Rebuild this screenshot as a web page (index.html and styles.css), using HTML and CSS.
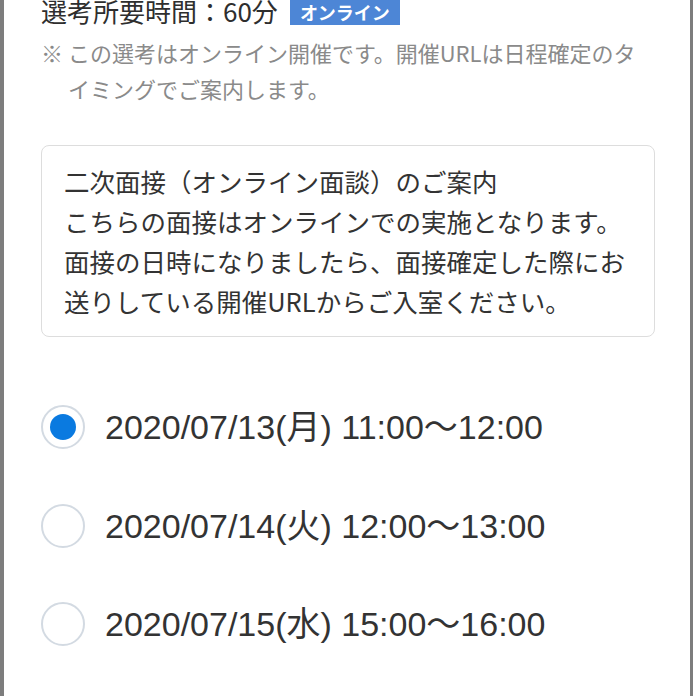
FILE: index.html
```html
<!DOCTYPE html>
<html lang="ja">
<head>
<meta charset="utf-8">
<title>選考日程</title>
<link rel="stylesheet" href="styles.css">
</head>
<body>
<div class="frame">
  <div class="content">
    <div class="title-row">
      <span class="title">選考所要時間：60分</span>
      <span class="badge">オンライン</span>
    </div>
    <p class="note">※ この選考はオンライン開催です。開催URLは日程確定のタイミングでご案内します。</p>
    <div class="info">二次面接（オンライン面談）のご案内<br>こちらの面接はオンラインでの実施となります。<br>面接の日時になりましたら、面接確定した際にお送りしている開催URLからご入室ください。</div>
    <ul class="options">
      <li class="option"><span class="radio checked"></span><span class="label">2020/07/13(月) 11:00〜12:00</span></li>
      <li class="option"><span class="radio"></span><span class="label">2020/07/14(火) 12:00〜13:00</span></li>
      <li class="option"><span class="radio"></span><span class="label">2020/07/15(水) 15:00〜16:00</span></li>
    </ul>
  </div>
</div>
</body>
</html>
```
FILE: styles.css
```css
html, body {
  margin: 0;
  padding: 0;
  background: #ffffff;
}
body {
  font-family: "Noto Sans CJK JP", "Noto Sans", sans-serif;
  color: #333333;
  overflow: hidden;
}
.frame {
  width: 686px;
  height: 696px;
  border-left: 4px solid #7d7d7d;
  border-right: 3px solid #7d7d7d;
  background: #ffffff;
  overflow: hidden;
}
.content {
  padding: 0 35px 0 37px;
  margin-top: -7px;
}
.title-row {
  display: flex;
  align-items: center;
  gap: 12px;
  height: 36px;
}
.title {
  font-size: 26px;
  line-height: 36px;
  color: #2e2e2e;
}
.badge {
  display: inline-block;
  background: #4d86d6;
  color: #ffffff;
  font-weight: 700;
  font-size: 18px;
  line-height: 25px;
  height: 25px;
  padding: 0 10px;
  margin-top: 3px;
}
.note {
  margin: 5px 12px 0 0;
  font-size: 22px;
  line-height: 36px;
  color: #8a8a8a;
  padding-left: 27px;
  text-indent: -27px;
}
.info {
  margin-top: 39px;
  border: 1px solid #dddddd;
  border-radius: 8px;
  padding: 15px 22px;
  font-size: 25.5px;
  line-height: 40px;
  color: #333333;
}
.options {
  list-style: none;
  margin: 41px 0 0 0;
  padding: 0;
}
.option {
  display: flex;
  align-items: center;
  gap: 20px;
  height: 98.5px;
}
.radio {
  box-sizing: border-box;
  width: 44px;
  height: 44px;
  border: 2px solid #d3dae2;
  border-radius: 50%;
  display: flex;
  align-items: center;
  justify-content: center;
  flex: none;
}
.radio.checked::after {
  content: "";
  width: 26px;
  height: 26px;
  border-radius: 50%;
  background: #0a7ae0;
}
.label {
  font-family: "Liberation Sans", "Noto Sans CJK JP", sans-serif;
  font-size: 34px;
  line-height: 40px;
  color: #333333;
}
```
